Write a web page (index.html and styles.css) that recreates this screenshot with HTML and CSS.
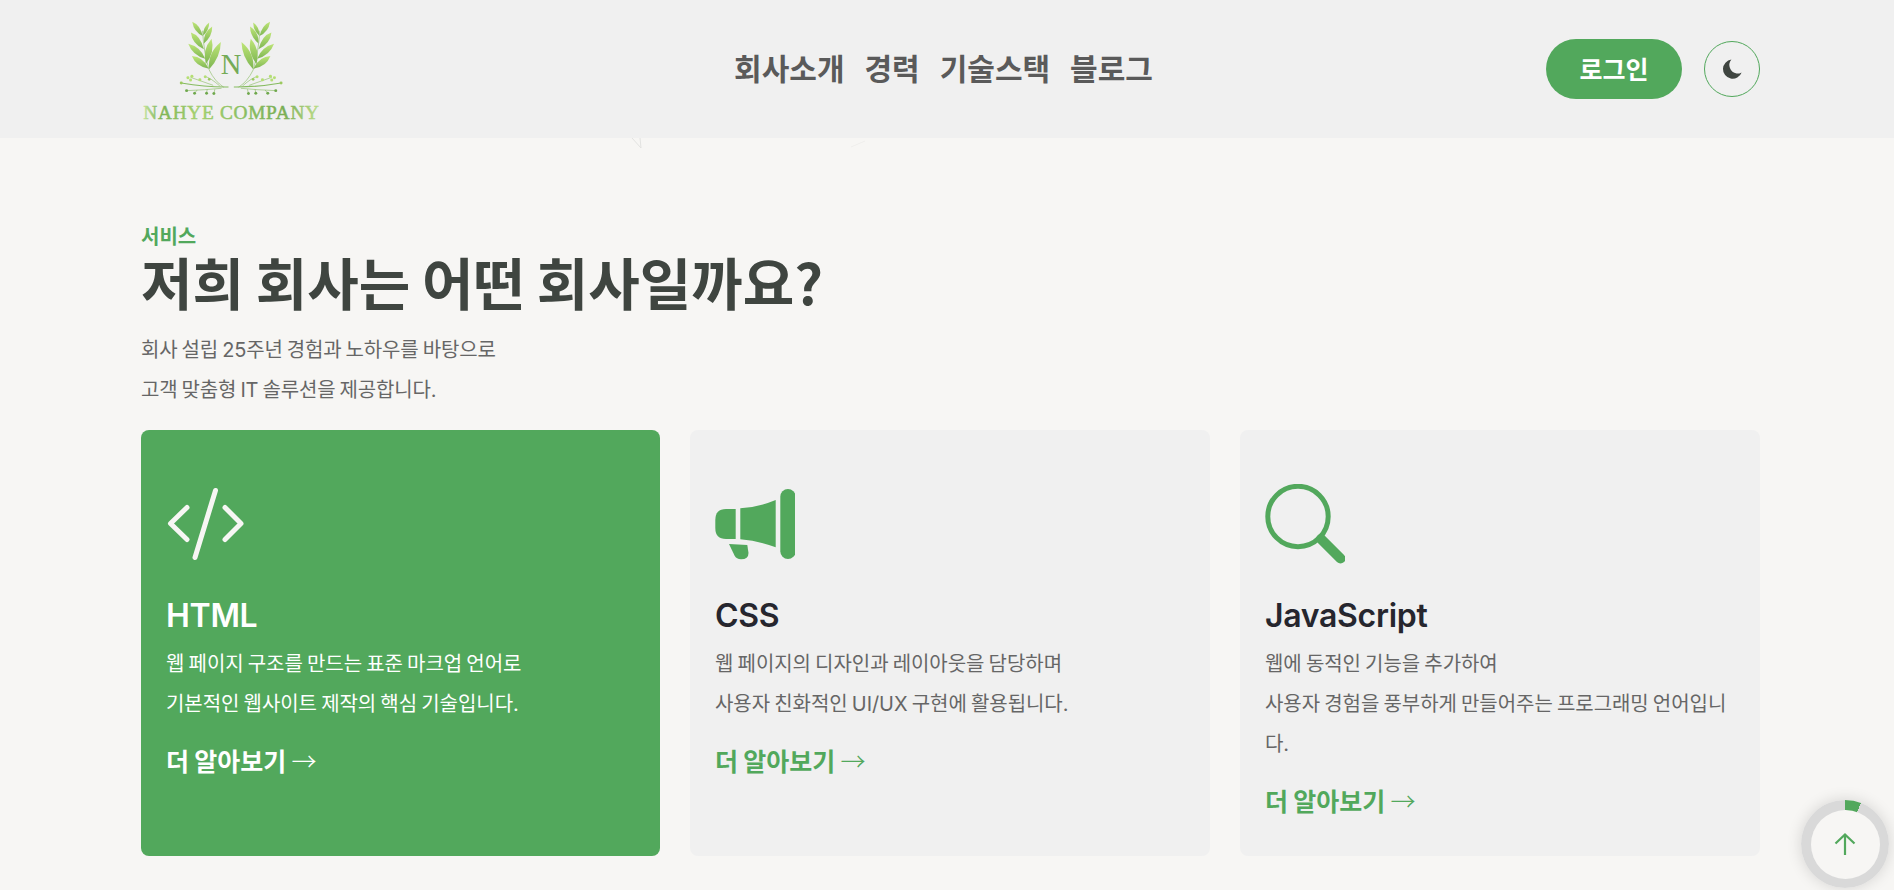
FILE: index.html
```html
<!DOCTYPE html>
<html lang="ko">
<head>
<meta charset="utf-8">
<title>Nahye Company</title>
<link rel="stylesheet" href="styles.css">
</head>
<body>
<header class="site-header">
  <a class="logo" href="#" aria-label="Nahye Company">
    <svg class="logo-mark" viewBox="60 42 550 330" width="183" height="110">
      <defs>
        <linearGradient id="leaf" x1="0" y1="0" x2="0" y2="1">
          <stop offset="0" stop-color="#bfe678"/>
          <stop offset="1" stop-color="#7db552"/>
        </linearGradient>
        <linearGradient id="word" gradientUnits="userSpaceOnUse" x1="70" y1="0" x2="598" y2="0">
          <stop offset="0" stop-color="#c4e39a"/>
          <stop offset="0.1" stop-color="#7cb356"/>
          <stop offset="0.3" stop-color="#a4d070"/>
          <stop offset="0.55" stop-color="#8cc062"/>
          <stop offset="0.8" stop-color="#79ae55"/>
          <stop offset="1" stop-color="#bcdd8a"/>
        </linearGradient>
        <g id="sprig">
          <path class="stem" d="M248 92 Q252 160 268 210 Q285 245 312 262"/>
          <path class="leaf" d="M217 65 Q240 74 249 108 Q222 96 217 65Z"/>
          <path class="leaf" d="M268 67 Q268 90 250 106 Q248 82 268 67Z"/>
          <path class="leaf" d="M213 97 Q242 106 252 148 Q216 130 213 97Z"/>
          <path class="leaf" d="M277 79 Q278 108 252 130 Q249 98 277 79Z"/>
          <path class="leaf" d="M205 131 Q242 140 256 176 Q218 166 205 131Z"/>
          <path class="leaf" d="M275 116 Q286 156 258 192 Q246 150 275 116Z"/>
          <path class="leaf" d="M216 168 Q250 170 267 206 Q228 200 216 168Z"/>
          <path class="leaf" d="M303 126 Q302 172 268 208 Q262 160 303 126Z"/>
          <path class="stem thick" d="M326 261 Q260 262 184 249"/>
          <path class="stem" d="M305 265 Q255 270 200 272"/>
          <path class="stem" d="M300 258 Q270 232 256 230"/>
          <path class="stem" d="M280 256 Q240 242 212 232"/>
          <path class="stem" d="M262 268 L260 280"/>
          <path class="stem" d="M285 268 L282 281"/>
          <path class="stem" d="M232 270 L224 280"/>
          <circle class="bud" cx="184" cy="249" r="4.500"/>
          <circle class="bud light" cx="204" cy="233" r="4.500"/>
          <circle class="bud light" cx="216" cy="229" r="4.500"/>
          <circle class="bud light" cx="212" cy="240" r="4.500"/>
          <circle class="bud light" cx="240" cy="239" r="4.500"/>
          <circle class="bud light" cx="256" cy="230" r="4.500"/>
          <circle class="bud" cx="268" cy="238" r="4"/>
          <circle class="bud dark" cx="200" cy="272" r="4.500"/>
          <circle class="bud dark" cx="224" cy="280" r="4.500"/>
          <circle class="bud dark" cx="260" cy="280" r="4.500"/>
          <circle class="bud dark" cx="282" cy="281" r="4.500"/>
        </g>
      </defs>
      <use href="#sprig"/>
      <use href="#sprig" transform="translate(668 0) scale(-1 1)"/>
      <text class="logo-n" x="334" y="222" text-anchor="middle">N</text>
      <text class="logo-word" x="70" y="357" textLength="528" lengthAdjust="spacing">NAHYE COMPANY</text>
    </svg>
  </a>
  <nav class="main-nav">
    <a href="#">회사소개</a>
    <a href="#">경력</a>
    <a href="#">기술스택</a>
    <a href="#">블로그</a>
  </nav>
  <div class="header-actions">
    <a class="login-btn" href="#">로그인</a>
    <button class="theme-btn" type="button" aria-label="다크 모드">
      <svg viewBox="0 0 24 24" width="24" height="24"><path d="M11.4 2.6 A9.6 9.6 0 1 0 21.6 15.4 A9.4 9.4 0 0 1 16.6 16.6 A8.6 8.6 0 0 1 11.4 2.6Z"/></svg>
    </button>
  </div>
</header>

<svg class="nav-ghost nav-ghost-left" viewBox="0 0 12 12" width="12" height="12"><path d="M1 0 L10 10 M9 0 L10 10"/></svg>
<svg class="nav-ghost nav-ghost-right" viewBox="0 0 16 8" width="16" height="8"><path d="M1 7 L15 1"/></svg>

<main class="services">
  <p class="eyebrow">서비스</p>
  <h1 class="headline">저희 회사는 어떤 회사일까요?</h1>
  <p class="lead">회사 설립 25주년 경험과 노하우를 바탕으로<br>고객 맞춤형 IT 솔루션을 제공합니다.</p>

  <div class="card-grid">
    <article class="card card-active">
      <svg class="card-icon" viewBox="0 0 80 80">
        <path class="code" d="M21 23.5 L4.500 39.500 L21 55.500 M59 23.500 L75 39.500 L59 55.500 M49.500 6.500 L29 73.500"/>
      </svg>
      <h2 class="card-title">HTML</h2>
      <p class="card-text">웹 페이지 구조를 만드는 표준 마크업 언어로<br>기본적인 웹사이트 제작의 핵심 기술입니다.</p>
      <a class="card-link" href="#">더 알아보기 <span class="arrow">→</span></a>
    </article>
    <article class="card">
      <svg class="card-icon" viewBox="0 0 80 80">
        <rect class="fill" x="65.300" y="5" width="15.300" height="70" rx="7.650"/>
        <path class="fill" d="M25.300 24.300 V55.300 Q44 57 60.700 63.300 V16 Q44 23 25.300 24.300Z"/>
        <path class="fill" d="M20.700 25 V55 H11 Q0.300 55 0.300 44 V36 Q0.300 25 11 25Z"/>
        <path class="fill" d="M14 60 L32.300 61 L33.500 69 Q33.500 75.300 26 75.300 Q21.500 75.300 19.500 71.500Z"/>
      </svg>
      <h2 class="card-title">CSS</h2>
      <p class="card-text">웹 페이지의 디자인과 레이아웃을 담당하며<br>사용자 친화적인 UI/UX 구현에 활용됩니다.</p>
      <a class="card-link" href="#">더 알아보기 <span class="arrow">→</span></a>
    </article>
    <article class="card">
      <svg class="card-icon" viewBox="0 0 80 80">
        <circle class="ring" cx="33" cy="32.500" r="30.200"/>
        <path class="handle" d="M56 55 L75.500 74.500"/>
      </svg>
      <h2 class="card-title">JavaScript</h2>
      <p class="card-text">웹에 동적인 기능을 추가하여<br>사용자 경험을 풍부하게 만들어주는 프로그래밍 언어입니다.</p>
      <a class="card-link" href="#">더 알아보기 <span class="arrow">→</span></a>
    </article>
  </div>
</main>

<a class="to-top" href="#" aria-label="맨 위로">
  <span class="to-top-inner">
    <svg viewBox="0 0 24 24" width="24" height="24"><path d="M12 23 V2.500 M2.500 11.500 L12 2.500 L21.500 11.500"/></svg>
  </span>
</a>
</body>
</html>
```

FILE: styles.css
```css
* { box-sizing: border-box; }

html, body { margin: 0; padding: 0; }

body {
  height: 890px;
  overflow: hidden;
  background: #f7f6f4;
  color: #555;
  font-family: "Inter", "Noto Sans CJK KR", sans-serif;
  position: relative;
}

a { text-decoration: none; color: inherit; }

.site-header {
  height: 138px;
  background: #f0f0f0;
  padding: 0 134px 0 140px;
  display: flex;
  align-items: center;
  justify-content: space-between;
}

.logo { display: flex; }

.stem { fill: none; stroke: #86bb60; stroke-width: 1.8; }
.stem.thick { stroke-width: 3.4; }
.leaf { fill: url(#leaf); }
.bud { fill: #9cc95f; }
.bud.light { fill: #b5df74; }
.bud.dark { fill: #6fa84d; }
.logo-n { font-family: "Liberation Serif", serif; font-size: 86px; fill: #74ab58; }
.logo-word {
  font-family: "Liberation Serif", serif;
  font-size: 58px;
  fill: url(#word);
  stroke: url(#word);
  stroke-width: 1.5;
}

.main-nav {
  display: flex;
  gap: 20px;
  padding-bottom: 4px;
  font-family: "Noto Sans CJK KR", sans-serif;
  font-size: 30px;
  font-weight: 700;
  color: #5a5a5a;
  margin-left: 18px;
}

.header-actions { display: flex; align-items: center; gap: 22px; }

.login-btn {
  width: 136px;
  height: 60px;
  padding-bottom: 2px;
  border-radius: 30px;
  background: #52a85c;
  color: #fff;
  font-family: "Noto Sans CJK KR", sans-serif;
  font-size: 25px;
  font-weight: 700;
  display: flex;
  align-items: center;
  justify-content: center;
}

.theme-btn {
  width: 56px;
  height: 56px;
  padding: 0;
  border: 1px solid #52a85c;
  border-radius: 50%;
  background: transparent;
  display: flex;
  align-items: center;
  justify-content: center;
}
.theme-btn path { fill: #3f4540; }

.nav-ghost { position: absolute; fill: none; stroke: #e2e2e0; stroke-width: 1; }
.nav-ghost-left { left: 631px; top: 138px; }
.nav-ghost-right { left: 850px; top: 140px; stroke: #f0efed; }

.services { padding: 84px 134px 34px 141px; }

.eyebrow {
  margin: 0;
  font-family: "Noto Sans CJK KR", sans-serif;
  font-size: 20px;
  line-height: 28px;
  font-weight: 700;
  color: #52a85c;
}

.headline {
  margin: 0;
  font-family: "Noto Sans CJK KR", sans-serif;
  font-size: 56px;
  line-height: 62px;
  font-weight: 700;
  word-spacing: -4px;
  color: #3f4540;
}

.lead {
  margin: 18px 0 0;
  font-size: 20px;
  line-height: 40px;
  letter-spacing: -0.15px;
  word-spacing: -1.4px;
  color: #666;
  padding-bottom: 20px;
}

.card-grid {
  display: grid;
  grid-template-columns: 519fr 520fr 520fr;
  gap: 30px;
  width: 1619px;
  height: 426px;
}

.card {
  background: #f0f0f0;
  border-radius: 8px;
  padding: 54px 25px 0;
  min-width: 0;
}

.card-icon { display: block; width: 80px; height: 80px; }
.card-icon .fill { fill: #52a85c; }
.card-icon .ring { fill: none; stroke: #52a85c; stroke-width: 5; }
.card-icon .handle { fill: none; stroke: #52a85c; stroke-width: 10; stroke-linecap: round; }
.card-icon .code { fill: none; stroke: #f7f6f4; stroke-width: 5; stroke-linecap: round; stroke-linejoin: round; }

.card-title {
  margin: 32px 0 0;
  font-size: 32px;
  line-height: 40px;
  font-weight: 600;
  letter-spacing: -0.3px;
  color: #26262e;
}

.card-text {
  margin: 8px 0 0;
  font-size: 20px;
  line-height: 40px;
  letter-spacing: -0.05px;
  word-spacing: -1.4px;
  color: #666;
}

.card-link {
  display: inline-block;
  margin-top: 16px;
  font-family: "Noto Sans CJK KR", sans-serif;
  font-size: 25px;
  line-height: 40px;
  font-weight: 700;
  word-spacing: -1.7px;
  color: #52a85c;
}
.card-link .arrow { font-weight: 300; }

.card-active { background: #52a85c; color: #fff; }
.card-active .card-title,
.card-active .card-text,
.card-active .card-link { color: #fff; }

.to-top {
  position: fixed;
  left: 1801px;
  top: 800px;
  width: 88px;
  height: 88px;
  border-radius: 50%;
  background: conic-gradient(#52a85c 0 21deg, #d9d9d9 21deg 360deg);
  box-shadow: 0 0 15px rgba(0, 0, 0, 0.14);
  display: flex;
  align-items: center;
  justify-content: center;
}

.to-top-inner {
  width: 69px;
  height: 69px;
  border-radius: 50%;
  background: #f7f6f4;
  display: flex;
  align-items: center;
  justify-content: center;
}
.to-top-inner path { fill: none; stroke: #52a85c; stroke-width: 2.2; }
```
